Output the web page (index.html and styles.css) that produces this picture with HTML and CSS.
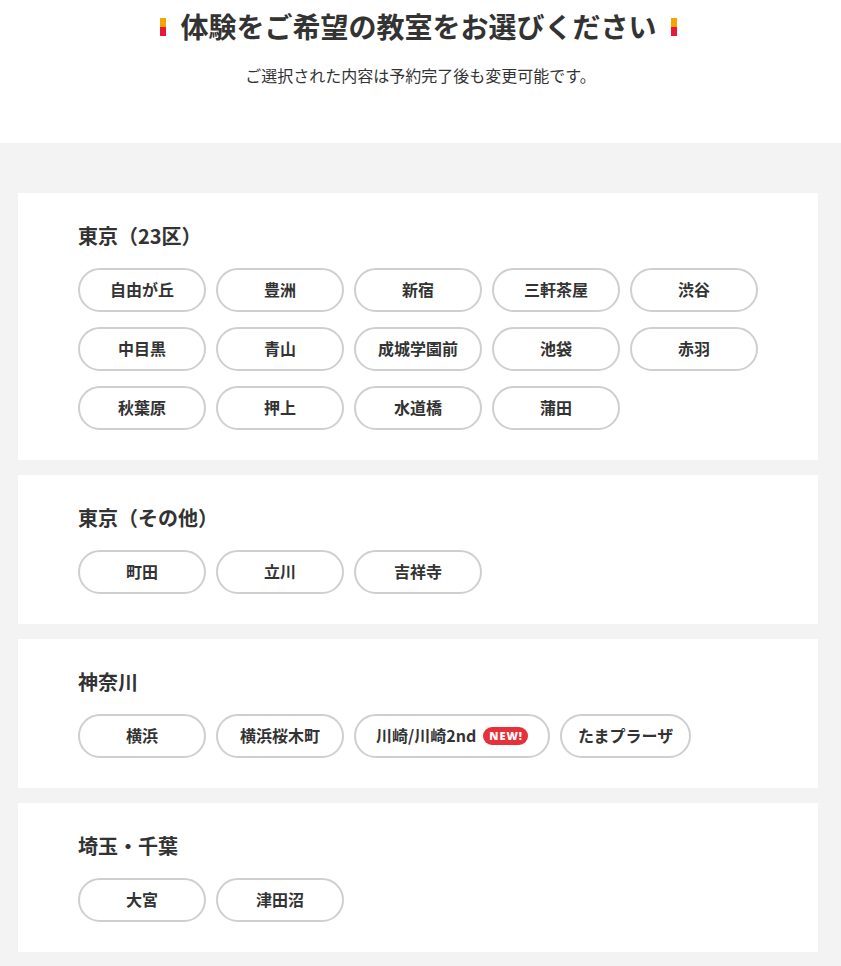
FILE: index.html
```html
<!DOCTYPE html>
<html lang="ja">
<head>
<meta charset="utf-8">
<title>教室選択</title>
<link rel="stylesheet" href="styles.css">
</head>
<body>
<header class="intro">
  <h1 class="title"><span class="mark"></span>体験をご希望の教室をお選びください<span class="mark"></span></h1>
  <p class="lead">ご選択された内容は予約完了後も変更可能です。</p>
</header>
<main class="areas">
  <section class="card">
    <h2 class="area-name">東京（23区）</h2>
    <div class="options">
      <button class="opt">自由が丘</button>
      <button class="opt">豊洲</button>
      <button class="opt">新宿</button>
      <button class="opt">三軒茶屋</button>
      <button class="opt">渋谷</button>
      <button class="opt">中目黒</button>
      <button class="opt">青山</button>
      <button class="opt">成城学園前</button>
      <button class="opt">池袋</button>
      <button class="opt">赤羽</button>
      <button class="opt">秋葉原</button>
      <button class="opt">押上</button>
      <button class="opt">水道橋</button>
      <button class="opt">蒲田</button>
    </div>
  </section>
  <section class="card">
    <h2 class="area-name">東京（その他）</h2>
    <div class="options">
      <button class="opt">町田</button>
      <button class="opt">立川</button>
      <button class="opt">吉祥寺</button>
    </div>
  </section>
  <section class="card">
    <h2 class="area-name">神奈川</h2>
    <div class="options">
      <button class="opt">横浜</button>
      <button class="opt">横浜桜木町</button>
      <button class="opt opt-new">川崎/川崎2nd<span class="badge">NEW!</span></button>
      <button class="opt">たまプラーザ</button>
    </div>
  </section>
  <section class="card">
    <h2 class="area-name">埼玉・千葉</h2>
    <div class="options">
      <button class="opt">大宮</button>
      <button class="opt">津田沼</button>
    </div>
  </section>
</main>
</body>
</html>
```
FILE: styles.css
```css
* { box-sizing: border-box; }
html, body {
  margin: 0;
  padding: 0;
  background: #fff;
  color: #333;
  font-family: "Noto Sans CJK JP", "Noto Sans", sans-serif;
}
.intro {
  height: 143px;
  padding-top: 8px;
  text-align: center;
}
.title {
  margin: 0;
  font-size: 28px;
  line-height: 36px;
  font-weight: 700;
  display: flex;
  justify-content: center;
  align-items: center;
  gap: 14px;
  padding-right: 4px;
}
.mark {
  display: inline-block;
  width: 6px;
  height: 18px;
  margin-top: 2px;
  background: linear-gradient(#f8a400 0 50%, #e8173c 50% 100%);
}
.lead {
  margin: 19px 0 0;
  font-size: 16px;
  line-height: 24px;
  color: #333;
}
.areas {
  background: #f3f3f3;
  padding: 50px 23px 14px 18px;
  display: flex;
  flex-direction: column;
  gap: 15px;
}
.card {
  background: #fff;
  padding: 29px 60px 30px 60px;
}
.area-name {
  margin: 0 0 19px;
  font-size: 20px;
  line-height: 27px;
  font-weight: 700;
}
.options {
  display: flex;
  flex-wrap: wrap;
  gap: 15px 10px;
}
.opt {
  min-width: 128px;
  height: 44px;
  padding: 0 16px 2px;
  border: 2px solid #cfcfcf;
  border-radius: 22px;
  background: #fff;
  color: #333;
  font-family: inherit;
  font-size: 16px;
  font-weight: 700;
  display: inline-flex;
  align-items: center;
  justify-content: center;
  gap: 7px;
}
.opt-new {
  padding: 0 20px 2px;
}
.badge {
  display: inline-block;
  background: #e6313a;
  color: #fff;
  font-size: 11px;
  font-weight: 900;
  letter-spacing: 1px;
  line-height: 18px;
  height: 18px;
  margin-top: 2px;
  padding: 0 5px 0 6px;
  border-radius: 9px;
  font-family: "Open Sans", "Noto Sans", sans-serif;
}
```
